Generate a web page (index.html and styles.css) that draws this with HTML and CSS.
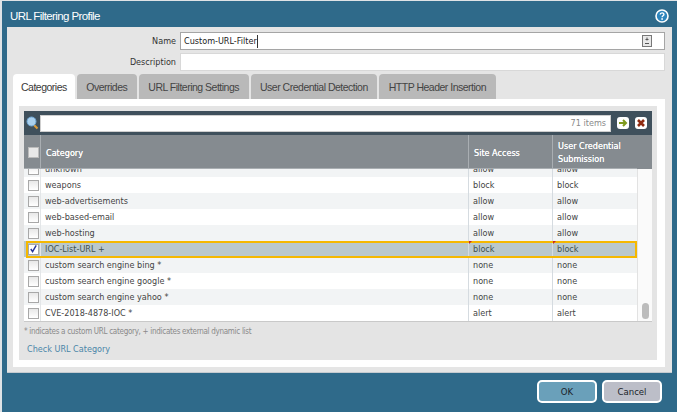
FILE: index.html
```html
<!DOCTYPE html>
<html lang="en">
<head>
<meta charset="utf-8">
<title>URL Filtering Profile</title>
<link rel="stylesheet" href="styles.css">
</head>
<body>
<div class="dialog">
  <header class="title-bar">
    <h1 class="title">URL Filtering Profile</h1>
    <svg class="help" width="14" height="14" viewBox="0 0 14 14"><circle cx="7" cy="7" r="6" fill="#2f86bd" stroke="#fff" stroke-width="1.6"/><path d="M5.2 5.6c0-2.3 3.7-2.3 3.7-.2 0 1.300-1.800 1.400-1.800 2.800" fill="none" stroke="#fff" stroke-width="1.400"/><rect x="6.300" y="9.200" width="1.600" height="1.600" fill="#fff"/></svg>
  </header>
  <main class="panel">
    <div class="field">
      <label class="field-label">Name</label>
      <div class="input input-active"><span class="input-text">Custom-URL-Filter</span><span class="caret"></span>
        <svg class="input-icon" width="10" height="12" viewBox="0 0 10 12"><rect x=".5" y=".5" width="9" height="11" fill="#e8e8e8" stroke="#777"/><path d="M5 2.500v3M3.500 4.500h3M3 8.500h4" stroke="#555" fill="none"/></svg>
      </div>
    </div>
    <div class="field">
      <label class="field-label">Description</label>
      <div class="input"></div>
    </div>
    <nav class="tabs">
      <div class="tab tab-active">Categories</div>
      <div class="tab">Overrides</div>
      <div class="tab">URL Filtering Settings</div>
      <div class="tab">User Credential Detection</div>
      <div class="tab">HTTP Header Insertion</div>
    </nav>
    <section class="tab-body">
      <div class="inner">
        <div class="grid">
          <div class="toolbar">
            <svg class="search-icon" width="13" height="14" viewBox="0 0 13 14"><path d="M8 9l3.500 3.500" stroke="#d89a3a" stroke-width="2.200"/><circle cx="5.500" cy="5.500" r="4.500" fill="#a9d0ee" stroke="#6ea6d4"/></svg>
            <div class="search"><span class="count">71 items</span></div>
            <span class="tool-btn"><svg width="12" height="12" viewBox="0 0 12 12"><path d="M2 6h6M6 3l3 3-3 3" fill="none" stroke="#7f9a1e" stroke-width="2"/></svg></span>
            <span class="tool-btn"><svg width="12" height="12" viewBox="0 0 12 12"><path d="M3 3l6 6M9 3l-6 6" fill="none" stroke="#8f2a10" stroke-width="2.600"/></svg></span>
          </div>
          <div class="head">
            <div class="hcell hcell-check"><span class="box box-head"></span></div>
            <div class="hcell">Category</div>
            <div class="hcell">Site Access</div>
            <div class="hcell">User Credential Submission</div>
          </div>
          <div class="body">
            <div class="rows">
              <div class="row row-clipped alt"><div class="cell cell-check"><span class="box"></span></div><div class="cell">unknown</div><div class="cell">allow</div><div class="cell">allow</div></div>
              <div class="row"><div class="cell cell-check"><span class="box"></span></div><div class="cell">weapons</div><div class="cell">block</div><div class="cell">block</div></div>
              <div class="row alt"><div class="cell cell-check"><span class="box"></span></div><div class="cell">web-advertisements</div><div class="cell">allow</div><div class="cell">allow</div></div>
              <div class="row"><div class="cell cell-check"><span class="box"></span></div><div class="cell">web-based-email</div><div class="cell">allow</div><div class="cell">allow</div></div>
              <div class="row alt"><div class="cell cell-check"><span class="box"></span></div><div class="cell">web-hosting</div><div class="cell">allow</div><div class="cell">allow</div></div>
              <div class="row selected"><div class="cell cell-check"><span class="box box-on"><svg width="10" height="10" viewBox="0 0 10 10"><path d="M2 5l2 3 4-7" fill="none" stroke="#27359a" stroke-width="1.600"/></svg></span></div><div class="cell">IOC-List-URL +</div><div class="cell cell-dirty">block</div><div class="cell cell-dirty">block</div></div>
              <div class="row alt"><div class="cell cell-check"><span class="box"></span></div><div class="cell">custom search engine bing *</div><div class="cell">none</div><div class="cell">none</div></div>
              <div class="row"><div class="cell cell-check"><span class="box"></span></div><div class="cell">custom search engine google *</div><div class="cell">none</div><div class="cell">none</div></div>
              <div class="row alt"><div class="cell cell-check"><span class="box"></span></div><div class="cell">custom search engine yahoo *</div><div class="cell">none</div><div class="cell">none</div></div>
              <div class="row"><div class="cell cell-check"><span class="box"></span></div><div class="cell">CVE-2018-4878-IOC *</div><div class="cell">alert</div><div class="cell">alert</div></div>
            </div>
            <div class="scroll"><span class="thumb"></span></div>
          </div>
        </div>
        <p class="note">* indicates a custom URL category, + indicates external dynamic list</p>
        <a class="link">Check URL Category</a>
      </div>
    </section>
  </main>
  <footer class="actions">
    <button class="btn btn-primary">OK</button>
    <button class="btn">Cancel</button>
  </footer>
</div>
</body>
</html>
```
FILE: styles.css
```css
* { box-sizing: border-box; }
html, body { margin: 0; height: 100%; }
body {
  padding: 1px 0 0 2px;
  background: #dfe3e6;
  font-family: "DejaVu Sans", "Liberation Sans", sans-serif;
  font-stretch: condensed;
  font-size: 9px;
  color: #444;
  overflow: hidden;
}
.dialog { width: 675px; height: 411px; display: flex; flex-direction: column; background: #2f6a8a; }
.title-bar {
  height: 26px;
  flex: none;
  display: flex;
  align-items: center;
  justify-content: space-between;
  padding: 3px 8px 0 8px;
}
.title { margin: 0; font-family: "Liberation Sans", sans-serif; font-size: 11.5px; font-weight: normal; color: #fff; letter-spacing: -.6px; }
.panel {
  flex: none;
  margin: 0 5px 0 5px;
  height: 345px;
  padding: 5px 7px 0 6px;
  background: #e5e5e5;
  box-shadow: 0 1px 0 #c5cbd0;
}
.field { display: flex; align-items: center; gap: 4px; height: 18px; margin-bottom: 3px; }
.field-label { width: 163px; text-align: right; color: #333; }
.input {
  flex: 1;
  height: 18px;
  display: flex;
  align-items: center;
  padding: 0 12px 0 3px;
  background: #fff;
  border: 1px solid #d8d8d8;
  color: #222;
}
.input-active { border-color: #a5a5a5; }
.caret { width: 1px; height: 13px; background: #333; }
.input-icon { margin-left: auto; }
.tabs { display: flex; gap: 2px; height: 25px; margin-top: 3px; }
.tab {
  display: flex;
  align-items: center;
  padding: 0 9.5px;
  background: #b9b9b9;
  border-radius: 4px 4px 0 0;
  color: #444;
  font-family: "Liberation Sans", sans-serif;
  font-size: 10.5px;
  letter-spacing: -.5px;
}
.tab-active { padding: 0 8px; background: #fff; color: #3a3a3a; }
.tab-body { height: 268px; padding: 7px 8px 0 6px; background: #fff; }
.inner { height: 254px; padding: 5px 5px 0; background: #e4e4e4; }
.grid { display: flex; flex-direction: column; box-shadow: 0 1px 0 #c9c9c9; }
.toolbar { height: 24px; display: flex; align-items: center; padding: 0 5px 0 2px; background: #3f505c; }
.search-icon { flex: none; margin-right: 1px; }
.search { width: 571px; height: 17px; display: flex; align-items: center; justify-content: flex-end; padding-right: 4px; background: #fff; border: 1px solid #cfcfcf; color: #8a8a8a; }
.tool-btn { width: 12px; height: 12px; margin-left: 6px; display: flex; background: #fff; border-radius: 3px; }
.head, .row { display: grid; grid-template-columns: 17px 428px 84px 84px; }
.head { height: 34px; background: #858b90; padding-right: 15px; color: #fff; text-shadow: 0 0 .6px #fff; }
.hcell { display: flex; align-items: center; padding: 3px 4px 0 5px; line-height: 13px; border-right: 1px solid #a9aeb2; border-bottom: 1px solid #a9aeb2; }
.hcell-check { padding: 1px 0 0 4px; }
.hcell:last-child { border-right: 0; }
.body { display: flex; height: 152px; background: #fff; }
.rows { width: 613px; overflow: hidden; }
.row { height: 16px; background: #fff; }
.row-clipped { margin-top: -8px; }
.alt { background: #f2f4f5; }
.cell { display: flex; align-items: center; padding: 0 4px; border-right: 1px solid #d5dbe0; color: #444; }
.cell-check { padding: 0 0 0 4px; border-right: 1px solid #e3e6e8; }
.cell:last-child { border-right: 0; }
.selected { position: relative; background: #bac8cc; z-index: 1; }
.selected::after { content: ""; position: absolute; inset: 0 0 -1px 2px; border: 2px solid #f5b800; pointer-events: none; }
.selected .cell { color: #3f5150; }
.cell-dirty { position: relative; }
.cell-dirty::before { content: ""; position: absolute; left: 0; top: 0; z-index: 2; border-top: 3px solid #c8281e; border-right: 3px solid transparent; }
.box { width: 11px; height: 11px; display: block; border: 1px solid #a8a8a8; background: linear-gradient(#e8e8e8, #fff); }
.box-head { background: #e8e8e8; border-color: #bbb; }
.box-on { display: flex; align-items: center; justify-content: center; background: #fff; }
.scroll { flex: 1; display: flex; flex-direction: column; justify-content: flex-end; align-items: center; padding-bottom: 2px; border-left: 1px solid #e2e2e2; background: #fafafa; }
.thumb { width: 7px; height: 16px; border-radius: 4px; background: #bcbcbc; }
.note { margin: 5px 0 0; font-size: 8px; letter-spacing: -.3px; color: #8a8a8a; line-height: 12px; }
.link { display: block; margin: 4px 0 0 3px; color: #4a86a8; line-height: 14px; }
.actions { flex: 1; display: flex; justify-content: flex-end; gap: 5px; padding: 8px 15px 0 0; }
.btn {
  width: 60px;
  height: 23px;
  padding: 0;
  background: #bcbec8;
  border: 2px solid #fff;
  border-radius: 5px;
  color: #1a1f2a;
  font-family: inherit;
  font-stretch: condensed;
  font-size: 9.5px;
}
.btn-primary { background: #6aa0ba; }
```
